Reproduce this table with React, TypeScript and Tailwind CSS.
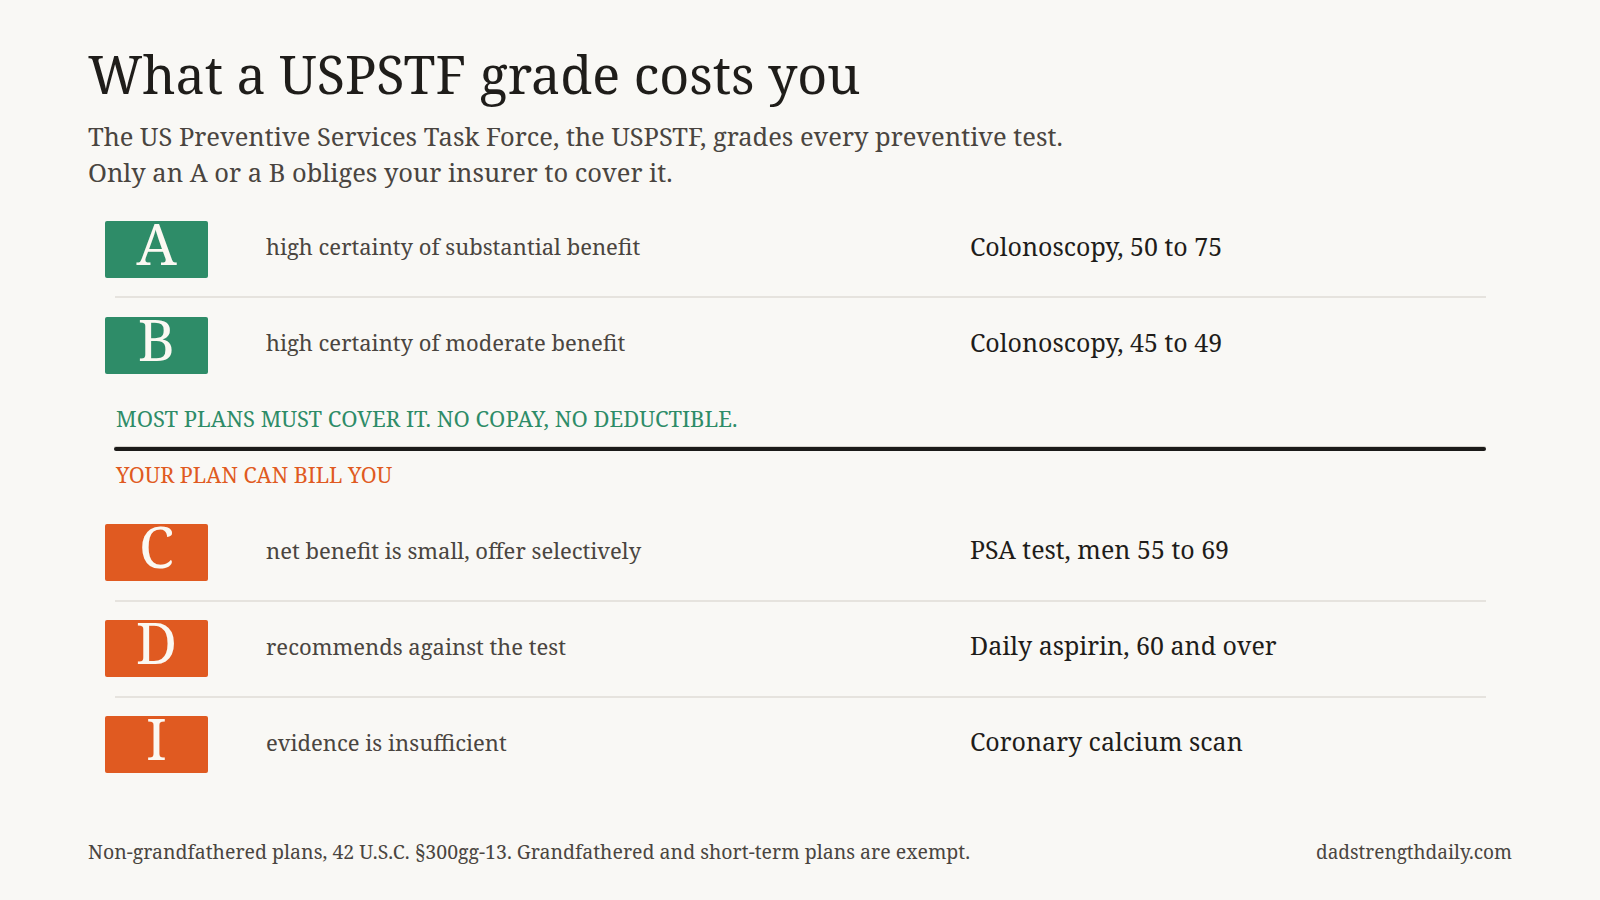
const GREEN = 'bg-[#2e8c68]';
const ORANGE = 'bg-[#e05a21]';

type Grade = {
  letter: string;
  meaning: string;
  example: string;
};

const COVERED: Grade[] = [
  { letter: 'A', meaning: 'high certainty of substantial benefit', example: 'Colonoscopy, 50 to 75' },
  { letter: 'B', meaning: 'high certainty of moderate benefit', example: 'Colonoscopy, 45 to 49' },
];

const BILLABLE: Grade[] = [
  { letter: 'C', meaning: 'net benefit is small, offer selectively', example: 'PSA test, men 55 to 69' },
  { letter: 'D', meaning: 'recommends against the test', example: 'Daily aspirin, 60 and over' },
  { letter: 'I', meaning: 'evidence is insufficient', example: 'Coronary calcium scan' },
];

export default function App() {
  return (
    <div className="w-[1600px] h-[900px] bg-[#f9f8f5] px-[88px] pt-[42px] overflow-hidden font-['Noto_Serif','DejaVu_Serif',serif]">
      {/* Heading */}
      <h1 className="text-[52px] leading-[64px] text-[#1f1d1a]">
        What a USPSTF grade costs you
      </h1>
      <p className="mt-[12px] text-[25.5px] leading-[36px] text-[#4a4540]">
        The US Preventive Services Task Force, the USPSTF, grades every preventive test.
        <br />
        Only an A or a B obliges your insurer to cover it.
      </p>

      {/* Grades */}
      <div className="mt-[12px] ml-[17px] w-[1381px]">
        <GradeList grades={COVERED} color={GREEN} />

        <div className="mt-[11.5px] ml-[11px] text-[22px] leading-[28px] uppercase text-[#2e8c68]">
          Most plans must cover it. No copay, no deductible.
        </div>
        <div className="mt-[15.5px] ml-[9px] h-[4px] rounded-full bg-[#1c1b19] shadow-[0_-1px_0_#d6d3cd]" />
        <div className="mt-[10px] ml-[11px] text-[21.5px] leading-[28px] uppercase text-[#e05a21]">
          Your plan can bill you
        </div>

        <div className="mt-[16.5px]">
          <GradeList grades={BILLABLE} color={ORANGE} />
        </div>
      </div>

      {/* Footer */}
      <div className="mt-[48px] flex items-baseline justify-between text-[#4a4540]">
        <p className="text-[19.5px] leading-[24px]">
          Non-grandfathered plans, 42 U.S.C. §300gg-13. Grandfathered and short-term plans are exempt.
        </p>
        <p className="text-[19px] leading-[24px]">dadstrengthdaily.com</p>
      </div>
    </div>
  );
}

function GradeList({ grades, color }: { grades: Grade[]; color: string }) {
  return (
    <div>
      {grades.map((g, i) => (
        <div key={g.letter}>
          <div className="h-[94px] flex items-center">
            <div
              className={`${color} w-[103px] h-[57px] rounded-[2px] text-center
                text-[#fbf8f2] text-[57px] leading-[45px]`}
            >
              {g.letter}
            </div>
            <div className="ml-[58px] mb-[5px] w-[704px] text-[22px] text-[#4a4540]">{g.meaning}</div>
            <div className="mb-[5px] text-[25px] text-[#1f1d1a]">{g.example}</div>
          </div>
          {i < grades.length - 1 && <div className="ml-[10px] h-[2px] bg-[#e6e3de]" />}
        </div>
      ))}
    </div>
  );
}
